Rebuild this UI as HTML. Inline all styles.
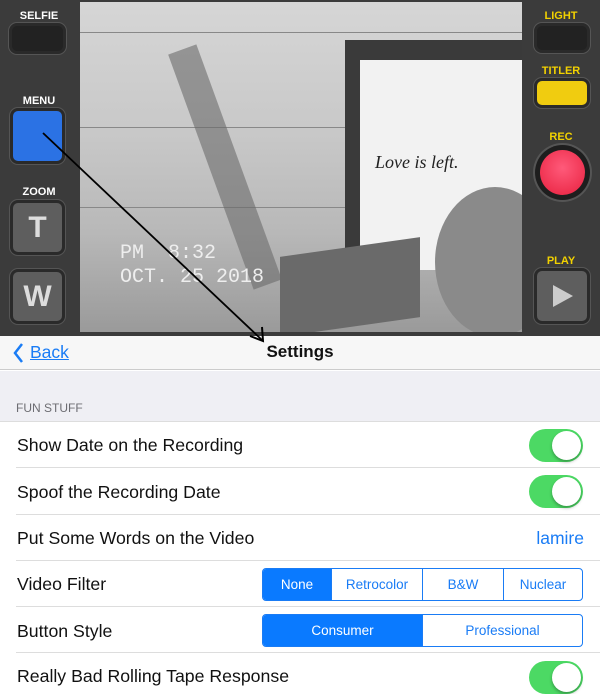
<!DOCTYPE html>
<html><head><style>
*{margin:0;padding:0;box-sizing:border-box}
body{width:600px;height:673px;overflow:hidden;background:#fff;font-family:"Liberation Sans",sans-serif;position:relative}
.a{position:absolute}
.lbl{position:absolute;font-weight:bold;font-size:11px;text-align:center;width:78px}
.btn{position:absolute;border-radius:5px;background:#222;box-shadow:0 0 0 3px #2a2a2a,0 0 0 4px #555}
.row{position:absolute;left:17px;font-size:17.7px;color:#111}
.sep{position:absolute;left:16px;right:0;height:1px;background:#ddd}
.tg{position:absolute;left:529px;width:54px;height:33px;border-radius:17px;background:#4cd964}
.tg:after{content:"";position:absolute;right:2px;top:2px;width:29px;height:29px;border-radius:50%;background:#fff;box-shadow:0 2px 3px rgba(0,0,0,.3)}
.seg{position:absolute;border:1px solid #1a7cf5;border-radius:4px;display:flex;overflow:hidden;font-size:13.5px;color:#1a7cf5}
.seg div{flex:1;display:flex;align-items:center;justify-content:center;border-left:1px solid #1a7cf5}
.seg div:first-child{border-left:none}
.seg .on{background:#0a7aff;color:#fff}
</style></head><body>
<div class="a" style="left:0;top:0;width:600px;height:336px;background:#3b3b3b"></div>
<div class="a" style="left:80px;top:2px;width:442px;height:330px;background:linear-gradient(180deg,#d6d6d6,#c8c8c8 40%,#b8b8b8 70%,#9a9a9a);overflow:hidden">
 <div class="a" style="left:0;top:30px;width:442px;height:1px;background:#888"></div>
 <div class="a" style="left:0;top:125px;width:442px;height:1px;background:#888"></div>
 <div class="a" style="left:0;top:205px;width:442px;height:1px;background:#888"></div>
 <div class="a" style="left:265px;top:38px;width:180px;height:230px;background:#3a3a3a"></div>
 <div class="a" style="left:280px;top:58px;width:162px;height:210px;background:#f2f2f2"></div>
 <div class="a" style="left:295px;top:150px;font-family:'Liberation Serif',serif;font-style:italic;font-size:18px;color:#222">Love is left.</div>
 <div class="a" style="left:355px;top:185px;width:120px;height:150px;border-radius:50%;background:#8a8a8a"></div>
 <div class="a" style="left:200px;top:245px;width:140px;height:80px;background:#6a6a6a;transform:skewY(-8deg)"></div>
 <div class="a" style="left:130px;top:40px;width:30px;height:250px;background:#6a6a6a;transform:rotate(-20deg);opacity:.6"></div>
 <div class="a" style="left:40px;top:240px;font-family:'Liberation Mono',monospace;font-size:20px;color:#eee;line-height:24px">PM &nbsp;8:32<br>OCT. 25 2018</div>
</div>
<div class="lbl" style="left:0;top:10px;color:#fff">SELFIE</div>
<div class="btn" style="left:12px;top:26px;width:51px;height:25px"></div>
<div class="lbl" style="left:0;top:95px;color:#fff">MENU</div>
<div class="btn" style="left:13px;top:111px;width:49px;height:50px;background:#2b72e4"></div>
<div class="lbl" style="left:0;top:186px;color:#fff">ZOOM</div>
<div class="btn" style="left:13px;top:203px;width:49px;height:49px;background:#5e5e5e;color:#ddd;font-weight:bold;font-size:30px;text-align:center;line-height:49px">T</div>
<div class="btn" style="left:13px;top:272px;width:49px;height:49px;background:#5e5e5e;color:#ddd;font-weight:bold;font-size:30px;text-align:center;line-height:49px">W</div>
<div class="lbl" style="left:522px;top:10px;color:#f2d100">LIGHT</div>
<div class="btn" style="left:537px;top:26px;width:50px;height:24px"></div>
<div class="lbl" style="left:522px;top:65px;color:#f2d100">TITLER</div>
<div class="btn" style="left:537px;top:81px;width:50px;height:24px;background:#f0cc10"></div>
<div class="lbl" style="left:522px;top:131px;color:#f2d100">REC</div>
<div class="a" style="left:535px;top:145px;width:55px;height:55px;border-radius:50%;background:#1e1e1e;box-shadow:0 0 0 2px #555"></div>
<div class="a" style="left:540px;top:150px;width:45px;height:45px;border-radius:50%;background:radial-gradient(circle at 50% 40%,#ff5a7a,#e8203e)"></div>
<div class="lbl" style="left:522px;top:255px;color:#f2d100">PLAY</div>
<div class="btn" style="left:537px;top:271px;width:50px;height:50px;background:#5e5e5e"></div>
<div class="a" style="left:553px;top:285px;width:0;height:0;border-left:20px solid #ccc;border-top:11px solid transparent;border-bottom:11px solid transparent"></div>
<div class="a" style="left:0;top:336px;width:600px;height:34px;background:#f7f7f7;border-bottom:1px solid #ccc"></div>
<svg class="a" style="left:12px;top:342px" width="14" height="22"><path d="M10 2 L3 11 L10 20" stroke="#1a7cf5" stroke-width="2.5" fill="none"/></svg>
<div class="a" style="left:30px;top:342px;font-size:17.5px;color:#1a7cf5;text-decoration:underline">Back</div>
<div class="a" style="left:0;width:600px;text-align:center;top:342px;font-size:17px;font-weight:bold;color:#111">Settings</div>
<div class="a" style="left:0;top:371px;width:600px;height:51px;background:#efeff4;border-bottom:1px solid #ddd"></div>
<div class="a" style="left:16px;top:401px;font-size:12px;color:#6d6d72">FUN STUFF</div>
<div class="row" style="top:435px">Show Date on the Recording</div>
<div class="tg" style="top:429px"></div>
<div class="sep" style="top:467px"></div>
<div class="row" style="top:482px">Spoof the Recording Date</div>
<div class="tg" style="top:475px"></div>
<div class="sep" style="top:514px"></div>
<div class="row" style="top:528px">Put Some Words on the Video</div>
<div class="a" style="right:16px;top:528px;font-size:17.5px;color:#1a7cf5">lamire</div>
<div class="sep" style="top:560px"></div>
<div class="row" style="top:574px">Video Filter</div>
<div class="seg" style="left:262px;top:568px;width:321px;height:33px"><div class="on" style="flex:0 0 68px">None</div><div style="flex:0 0 91px">Retrocolor</div><div style="flex:0 0 81px">B&amp;W</div><div>Nuclear</div></div>
<div class="sep" style="top:606px"></div>
<div class="row" style="top:621px">Button Style</div>
<div class="seg" style="left:262px;top:614px;width:321px;height:33px"><div class="on">Consumer</div><div>Professional</div></div>
<div class="sep" style="top:652px"></div>
<div class="row" style="top:666px">Really Bad Rolling Tape Response</div>
<div class="tg" style="top:661px"></div>
<svg class="a" style="left:0;top:0" width="600" height="360"><line x1="43" y1="133" x2="262" y2="340" stroke="#000" stroke-width="1.8"/><path d="M250 336 L263 341 L262 327" stroke="#000" stroke-width="2" fill="none"/></svg>
</body></html>
